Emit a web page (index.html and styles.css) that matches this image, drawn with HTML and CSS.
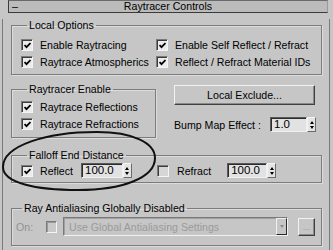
FILE: index.html
```html
<!DOCTYPE html>
<html lang="en">
<head>
    <meta charset="UTF-8">
    <link rel="stylesheet" href="styles.css">
</head>
<body>
    <div class="title">
        <span class="minus">–</span>
        <span class="title-text">Raytracer Controls</span>
    </div>
    <div class="panel">
        <fieldset class="group local">
            <legend>Local Options</legend>
            <div class="checks">
                <label class="check"><span class="box"><svg viewBox="0 0 7 7"><path d="M0.5 3 L2.5 5.2 L6.5 1"/></svg></span>Enable Raytracing</label>
                <label class="check"><span class="box"><svg viewBox="0 0 7 7"><path d="M0.5 3 L2.5 5.2 L6.5 1"/></svg></span>Enable Self Reflect / Refract</label>
                <label class="check"><span class="box"><svg viewBox="0 0 7 7"><path d="M0.5 3 L2.5 5.2 L6.5 1"/></svg></span>Raytrace Atmospherics</label>
                <label class="check"><span class="box"><svg viewBox="0 0 7 7"><path d="M0.5 3 L2.5 5.2 L6.5 1"/></svg></span>Reflect / Refract Material IDs</label>
            </div>
        </fieldset>

        <div class="enable-row">
            <fieldset class="group enable">
                <legend>Raytracer Enable</legend>
                <label class="check"><span class="box"><svg viewBox="0 0 7 7"><path d="M0.5 3 L2.5 5.2 L6.5 1"/></svg></span>Raytrace Reflections</label>
                <label class="check"><span class="box"><svg viewBox="0 0 7 7"><path d="M0.5 3 L2.5 5.2 L6.5 1"/></svg></span>Raytrace Refractions</label>
            </fieldset>
            <div class="side">
                <button class="btn exclude">Local Exclude...</button>
                <div class="bump">
                    <span>Bump Map Effect :</span>
                    <span class="spinner">
                        <span class="field">1.0</span>
                        <span class="arrows"><i class="up"></i><i class="down"></i></span>
                    </span>
                </div>
            </div>
        </div>

        <fieldset class="group falloff">
            <legend>Falloff End Distance</legend>
            <div class="falloff-row">
                <div class="item">
                    <label class="check"><span class="box"><svg viewBox="0 0 7 7"><path d="M0.5 3 L2.5 5.2 L6.5 1"/></svg></span>Reflect</label>
                    <span class="spinner wide">
                        <span class="field">100.0</span>
                        <span class="arrows"><i class="up"></i><i class="down"></i></span>
                    </span>
                </div>
                <div class="item">
                    <label class="check"><span class="box off"></span>Refract</label>
                    <span class="spinner wide">
                        <span class="field">100.0</span>
                        <span class="arrows"><i class="up"></i><i class="down"></i></span>
                    </span>
                </div>
            </div>
        </fieldset>

        <fieldset class="group aa">
            <legend>Ray Antialiasing Globally Disabled</legend>
            <div class="aa-row">
                <span class="dim">On:</span>
                <span class="box disabled"></span>
                <div class="combo">
                    <span class="combo-text">Use Global Antialiasing Settings</span>
                    <span class="combo-btn"><i class="down"></i></span>
                </div>
                <button class="btn dots">...</button>
            </div>
        </fieldset>
    </div>

    <!-- hand drawn mark over the falloff group -->
    <svg class="circle" width="333" height="250" viewBox="0 0 333 250">
        <path d="M3 167 C3 146 45 132 97 132 C133 132 155 143 155 158 C155 178 122 190 78 190 C36 190 3 183 3 167 Z"/>
    </svg>
</body>
</html>
```

FILE: styles.css
```css
html, body {
    margin: 0;
    height: 100%;
    overflow: hidden;
}

body {
    background: #c6c6c6;
    font-family: "Liberation Sans", Arial, sans-serif;
    font-size: 10.6px;
    color: #000;
    position: relative;
}

/* rollout title */
.title {
    box-sizing: border-box;
    margin-left: 8px;
    width: 320px;
    height: 13px;
    background: #bbbbbb;
    border: 1px solid #3a3a3a;
    border-top-color: #6a6a6a;
    border-right-color: #9a9a9a;
    display: flex;
    align-items: center;
    line-height: 11px;
}
.minus {
    width: 12px;
    padding-left: 3px;
}
.title-text {
    flex: 1;
    text-align: center;
    padding-right: 15px;
}

.panel {
    box-sizing: border-box;
    margin-left: 2px;
    width: 328px;
    height: 240px;
    border-left: 1px solid #7a7a7a;
    border-right: 1px solid #7a7a7a;
    padding: 0 7px 0 8px;
}

/* group boxes */
.group {
    margin: 0;
    padding: 0;
    border: 1px solid #7c7c7c;
    box-shadow: 1px 1px 0 #dcdcdc, inset 1px 1px 0 #dcdcdc;
    min-inline-size: 0;
}
.group legend {
    padding: 0 2px;
    margin-left: 6px;
    line-height: 12px;
}

.local {
    margin-top: 6px;
    padding: 5px 0 4px 9px;
}
.checks {
    display: grid;
    grid-template-columns: 135px 1fr;
}

.check {
    display: flex;
    align-items: center;
    height: 17px;
    gap: 7px;
    white-space: nowrap;
}

.box {
    box-sizing: border-box;
    width: 12px;
    height: 12px;
    flex: none;
    background: #ececec;
    border: 1px solid;
    border-color: #7a7a7a #f4f4f4 #f4f4f4 #7a7a7a;
    box-shadow: inset 1px 1px 0 #3c3c3c;
    display: flex;
    align-items: center;
    justify-content: center;
    padding: 1px 0 0 1px;
}
.box svg {
    width: 7px;
    height: 7px;
}
.box path {
    fill: none;
    stroke: #000;
    stroke-width: 1.8;
}
.box.off {
    background: #d6d6d6;
}
.box.disabled {
    background: #c9c9c9;
    box-shadow: inset 1px 1px 0 #9a9a9a;
}

.enable-row {
    display: flex;
    margin-top: 8px;
}
.enable {
    width: 145px;
    box-sizing: border-box;
    padding: 3px 0 5px 9px;
}
.side {
    margin-left: 18px;
    width: 142px;
    display: flex;
    flex-direction: column;
}

.btn {
    font: inherit;
    color: #000;
    background: #c6c6c6;
    border: 1px solid;
    border-color: #f2f2f2 #404040 #404040 #f2f2f2;
    box-shadow: inset -1px -1px 0 #8a8a8a;
    padding: 0;
}
.exclude {
    margin-top: 2px;
    width: 141px;
    height: 20px;
}

.bump {
    margin-top: 12px;
    display: flex;
    align-items: center;
    justify-content: space-between;
}

.spinner {
    display: flex;
    height: 15px;
}
.field {
    box-sizing: border-box;
    width: 37px;
    height: 15px;
    background: #e2e2e2;
    border: 1px solid;
    border-color: #5a5a5a #f0f0f0 #f0f0f0 #5a5a5a;
    box-shadow: inset 1px 1px 0 #2c2c2c;
    padding: 0 0 0 3px;
    line-height: 13px;
    font-size: 11.5px;
}
.spinner.wide .field {
    width: 42px;
}
.arrows {
    box-sizing: border-box;
    width: 9px;
    height: 15px;
    background: #e4e4e4;
    border: 1px solid;
    border-color: #f4f4f4 #6a6a6a #6a6a6a #f4f4f4;
    display: flex;
    flex-direction: column;
    align-items: center;
    justify-content: center;
    gap: 2px;
}
.up, .down {
    width: 0;
    height: 0;
    border-left: 2.5px solid transparent;
    border-right: 2.5px solid transparent;
}
.up {
    border-bottom: 3px solid #000;
}
.down {
    border-top: 3px solid #000;
}

.falloff {
    margin-top: 11px;
    padding: 1px 0 3px 9px;
}
.falloff-row {
    display: grid;
    grid-template-columns: 136px 1fr;
}
.item {
    display: flex;
    align-items: center;
    gap: 8px;
}
.item .check {
    gap: 7px;
}
.item:last-child .check {
    gap: 8px;
}
.item:last-child .spinner {
    margin-left: 8px;
}
.item:last-child .field {
    width: 40px;
}

.aa {
    margin-top: 19px;
    padding: 3px 0 9px 4px;
}
.aa-row {
    display: flex;
    align-items: center;
}
.dim {
    color: #929292;
    width: 30px;
}
.aa .box {
    width: 11px;
    height: 12px;
}
.combo {
    box-sizing: border-box;
    margin-left: 6px;
    width: 225px;
    height: 19px;
    border: 1px solid;
    border-color: #7a7a7a #f0f0f0 #f0f0f0 #7a7a7a;
    box-shadow: inset 1px 1px 0 #a0a0a0;
    display: flex;
    align-items: center;
}
.combo-text {
    flex: 1;
    color: #9a9a9a;
    padding-left: 5px;
}
.combo-btn {
    box-sizing: border-box;
    width: 11px;
    height: 17px;
    background: #c6c6c6;
    border: 1px solid;
    border-color: #f0f0f0 #2a2a2a #2a2a2a #f0f0f0;
    display: flex;
    align-items: center;
    justify-content: center;
}
.combo-btn .down {
    border-top-color: #8a8a8a;
}
.dots {
    margin-left: 10px;
    width: 17px;
    height: 18px;
    color: #9a9a9a;
    line-height: 10px;
    font-size: 9px;
}

/* marker ellipse drawn over the screenshot */
.circle {
    position: absolute;
    left: 0;
    top: 0;
    pointer-events: none;
}
.circle path {
    fill: none;
    stroke: #111;
    stroke-width: 2;
}
```
